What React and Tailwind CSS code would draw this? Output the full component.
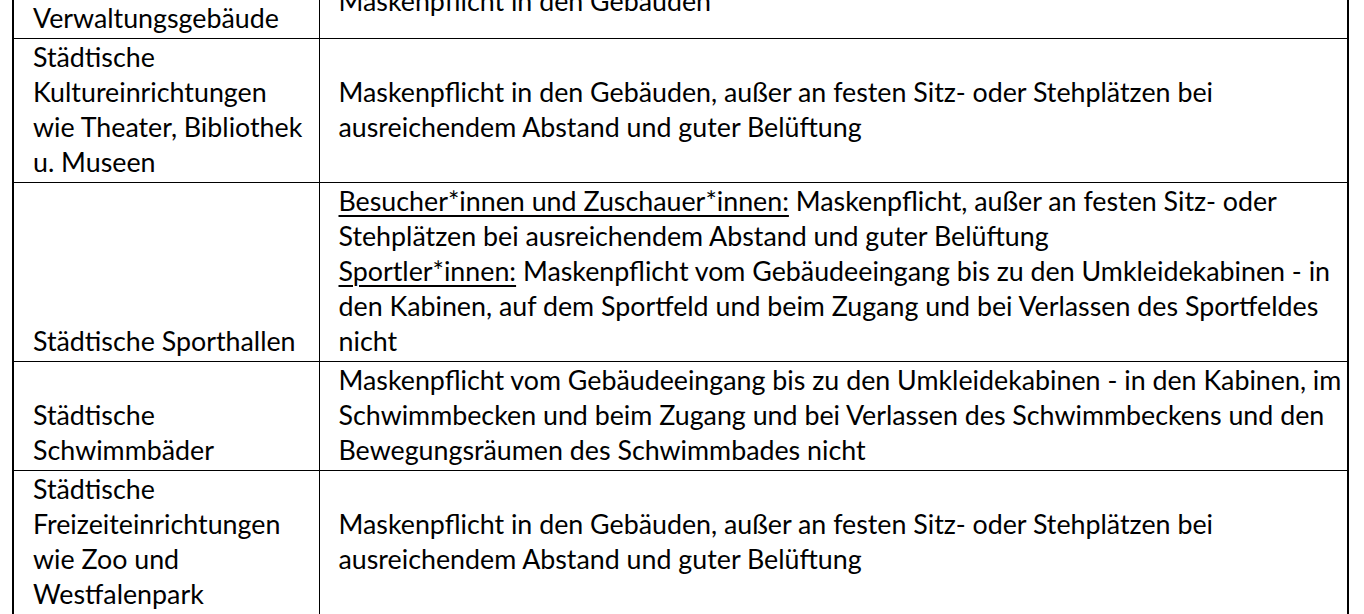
import React from "react";

const rows = [
  {
    left: ["Städtische", "Verwaltungsgebäude"],
    leftAlign: "align-middle",
    right: [["Maskenpflicht in den Gebäuden"]],
  },
  {
    left: ["Städtische", "Kultureinrichtungen", "wie Theater, Bibliothek", "u. Museen"],
    leftAlign: "align-middle",
    right: [
      ["Maskenpflicht in den Gebäuden, außer an festen Sitz- oder Stehplätzen bei"],
      ["ausreichendem Abstand und guter Belüftung"],
    ],
  },
  {
    left: ["Städtische Sporthallen"],
    leftAlign: "align-bottom",
    right: [
      [{ u: "Besucher*innen und Zuschauer*innen:" }, " Maskenpflicht, außer an festen Sitz- oder"],
      ["Stehplätzen bei ausreichendem Abstand und guter Belüftung"],
      [{ u: "Sportler*innen:" }, " Maskenpflicht vom Gebäudeeingang bis zu den Umkleidekabinen - in"],
      ["den Kabinen, auf dem Sportfeld und beim Zugang und bei Verlassen des Sportfeldes"],
      ["nicht"],
    ],
  },
  {
    left: ["Städtische", "Schwimmbäder"],
    leftAlign: "align-bottom",
    right: [
      ["Maskenpflicht vom Gebäudeeingang bis zu den Umkleidekabinen - in den Kabinen, im"],
      ["Schwimmbecken und beim Zugang und bei Verlassen des Schwimmbeckens und den"],
      ["Bewegungsräumen des Schwimmbades nicht"],
    ],
  },
  {
    left: ["Städtische", "Freizeiteinrichtungen", "wie Zoo und", "Westfalenpark"],
    leftAlign: "align-middle",
    right: [
      ["Maskenpflicht in den Gebäuden, außer an festen Sitz- oder Stehplätzen bei"],
      ["ausreichendem Abstand und guter Belüftung"],
    ],
  },
];

function Line({ parts }) {
  return (
    <div>
      {parts.map((p, i) =>
        typeof p === "string" ? (
          <span key={i}>{p}</span>
        ) : (
          <span key={i} className="underline underline-offset-[4px] decoration-[1.5px]">
            {p.u}
          </span>
        )
      )}
    </div>
  );
}

export default function App() {
  return (
    <div className="h-[614px] overflow-hidden bg-white text-black">
      <table
        className="ml-[12px] -mt-[36px] w-[1337px] table-fixed border-collapse whitespace-nowrap text-[26.8px] leading-[35px]"
        style={{ fontFamily: "Lato, 'Liberation Sans', sans-serif" }}
      >
        <colgroup>
          <col className="w-[306px]" />
          <col />
        </colgroup>
        <tbody>
          {rows.map((r, i) => (
            <tr key={i}>
              <td
                className={`${r.leftAlign} border-y border-r border-l-2 border-black pl-[19px] pt-px pb-[2px]`}
              >
                {r.left.map((l, j) => (
                  <div key={j}>{l}</div>
                ))}
              </td>
              <td className="align-middle border-y border-r-2 border-black pl-[19px] pt-px pb-[2px]">
                {r.right.map((parts, j) => (
                  <Line key={j} parts={parts} />
                ))}
              </td>
            </tr>
          ))}
        </tbody>
      </table>
    </div>
  );
}
